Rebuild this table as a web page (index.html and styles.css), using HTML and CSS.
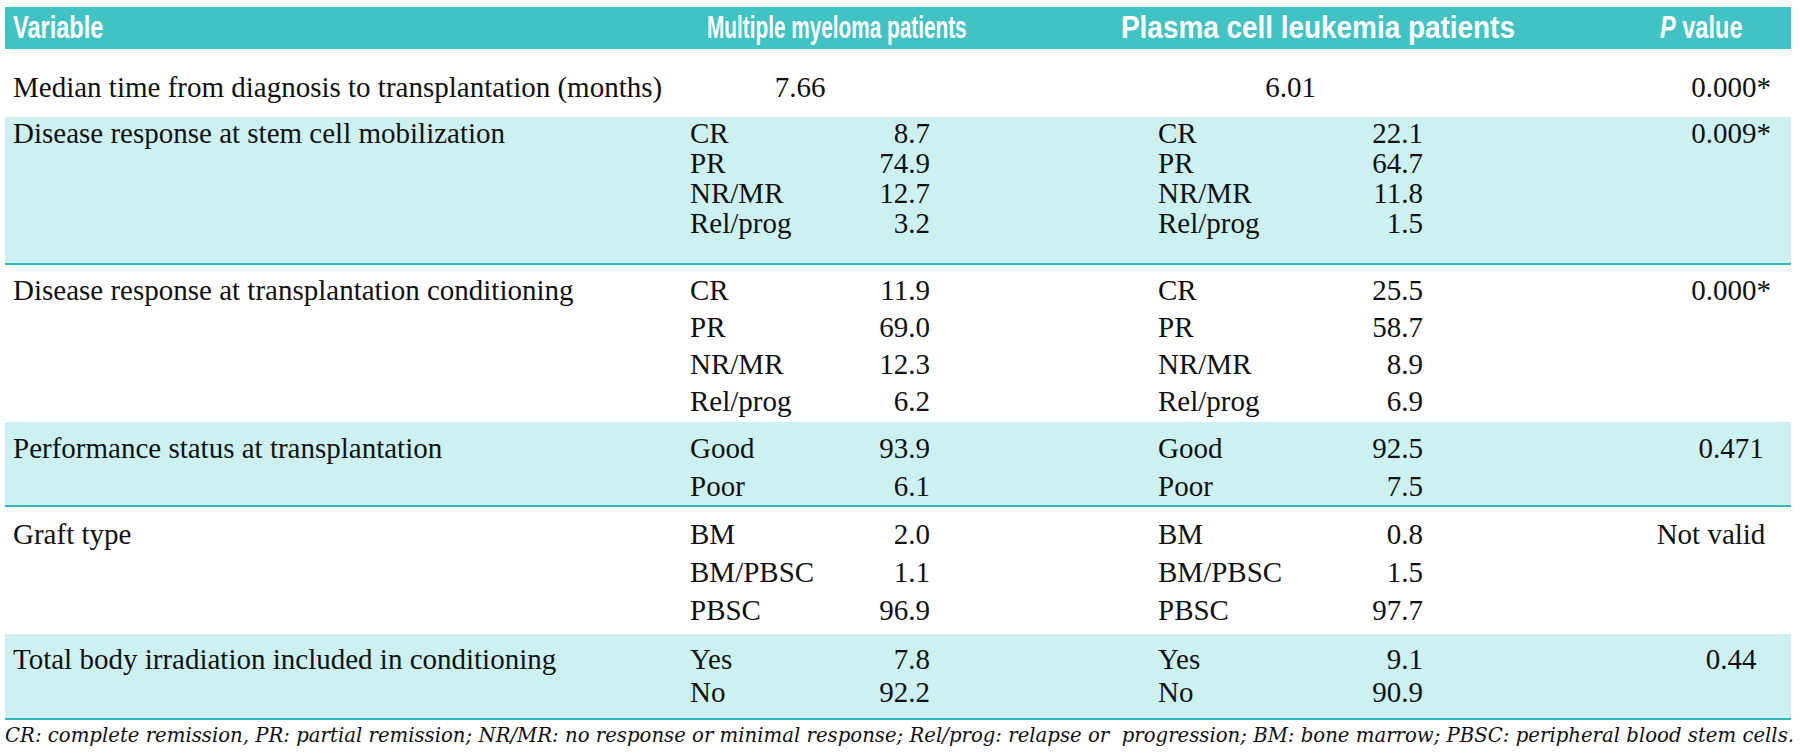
FILE: index.html
```html
<!DOCTYPE html>
<html>
<head>
<meta charset="utf-8">
<link rel="stylesheet" href="styles.css">
</head>
<body>
<div class="table">
  <div class="head">
    <div class="h-var"><span class="ht">Variable</span></div>
    <div class="h-mm"><span class="ht narrow">Multiple myeloma patients</span></div>
    <div class="h-pcl"><span class="ht wide">Plasma cell leukemia patients</span></div>
    <div class="h-p"><span class="ht"><i>P</i> value</span></div>
  </div>

  <div class="row first">
    <div class="var">Median time from diagnosis to transplantation (months)</div>
    <div class="mm center mm-one">7.66</div>
    <div class="pcl center">6.01</div>
    <div class="pv">0.000*</div>
  </div>

  <div class="row shade r2">
    <div class="var">Disease response at stem cell mobilization</div>
    <div class="mm">
      <div class="ln"><span>CR</span><span>8.7</span></div>
      <div class="ln"><span>PR</span><span>74.9</span></div>
      <div class="ln"><span>NR/MR</span><span>12.7</span></div>
      <div class="ln"><span>Rel/prog</span><span>3.2</span></div>
    </div>
    <div class="pcl">
      <div class="ln"><span>CR</span><span>22.1</span></div>
      <div class="ln"><span>PR</span><span>64.7</span></div>
      <div class="ln"><span>NR/MR</span><span>11.8</span></div>
      <div class="ln"><span>Rel/prog</span><span>1.5</span></div>
    </div>
    <div class="pv">0.009*</div>
  </div>

  <div class="row plain r3">
    <div class="var">Disease response at transplantation conditioning</div>
    <div class="mm">
      <div class="ln"><span>CR</span><span>11.9</span></div>
      <div class="ln"><span>PR</span><span>69.0</span></div>
      <div class="ln"><span>NR/MR</span><span>12.3</span></div>
      <div class="ln"><span>Rel/prog</span><span>6.2</span></div>
    </div>
    <div class="pcl">
      <div class="ln"><span>CR</span><span>25.5</span></div>
      <div class="ln"><span>PR</span><span>58.7</span></div>
      <div class="ln"><span>NR/MR</span><span>8.9</span></div>
      <div class="ln"><span>Rel/prog</span><span>6.9</span></div>
    </div>
    <div class="pv">0.000*</div>
  </div>

  <div class="row shade r4">
    <div class="var">Performance status at transplantation</div>
    <div class="mm">
      <div class="ln"><span>Good</span><span>93.9</span></div>
      <div class="ln"><span>Poor</span><span>6.1</span></div>
    </div>
    <div class="pcl">
      <div class="ln"><span>Good</span><span>92.5</span></div>
      <div class="ln"><span>Poor</span><span>7.5</span></div>
    </div>
    <div class="pv">0.471</div>
  </div>

  <div class="row plain r5">
    <div class="var">Graft type</div>
    <div class="mm">
      <div class="ln"><span>BM</span><span>2.0</span></div>
      <div class="ln"><span>BM/PBSC</span><span>1.1</span></div>
      <div class="ln"><span>PBSC</span><span>96.9</span></div>
    </div>
    <div class="pcl">
      <div class="ln"><span>BM</span><span>0.8</span></div>
      <div class="ln"><span>BM/PBSC</span><span>1.5</span></div>
      <div class="ln"><span>PBSC</span><span>97.7</span></div>
    </div>
    <div class="pv nv">Not valid</div>
  </div>

  <div class="row shade r6">
    <div class="var">Total body irradiation included in conditioning</div>
    <div class="mm">
      <div class="ln"><span>Yes</span><span>7.8</span></div>
      <div class="ln"><span>No</span><span>92.2</span></div>
    </div>
    <div class="pcl">
      <div class="ln"><span>Yes</span><span>9.1</span></div>
      <div class="ln"><span>No</span><span>90.9</span></div>
    </div>
    <div class="pv">0.44</div>
  </div>
</div>
<p class="note">CR: complete remission, PR: partial remission; NR/MR: no response or minimal response; Rel/prog: relapse or&nbsp; progression; BM: bone marrow; PBSC: peripheral blood stem cells.</p>
</body>
</html>
```

FILE: styles.css
```css
html, body {
  margin: 0;
  padding: 0;
  background: #ffffff;
}

body {
  padding: 7px 9px 0 5px;
  font-family: "Liberation Serif", "Times New Roman", serif;
  color: #111111;
}

.table {
  width: 1786px;
}

/* header band */
.head {
  display: grid;
  grid-template-columns: 702px 414px 1fr 210px;
  height: 42px;
  background: #42c3c3;
  color: #ffffff;
  font-family: "Liberation Sans", Arial, sans-serif;
  font-weight: bold;
  font-size: 31px;
  line-height: 42px;
  white-space: nowrap;
  overflow: hidden;
}

.h-var {
  padding-left: 8px;
}

.h-p {
  padding-left: 79px;
}

.ht {
  display: inline-block;
  transform: scaleX(0.76);
  transform-origin: left center;
}

.ht.narrow {
  transform: scaleX(0.67);
}

.ht.wide {
  transform: scaleX(0.9);
}

/* body rows */
.row {
  display: grid;
  grid-template-columns: 685px 240px 228px 265px 1fr 180px;
  font-size: 29px;
  line-height: 30px;
}

.row.shade {
  background: #cdf1f1;
  border-bottom: 2px solid #2fb9b9;
}

.row.first {
  padding: 23px 0 15px;
}

.row.r2 {
  padding: 1px 0 25px;
}

.row.r3 {
  line-height: 37px;
  padding: 7px 0 2px;
}

.row.r4 {
  line-height: 38px;
  padding: 7px 0 0;
}

.row.r5 {
  line-height: 38px;
  padding: 8px 0 5px;
}

.row.r6 {
  line-height: 33px;
  padding: 9px 0 9px;
}

.var {
  grid-column: 1;
  padding-left: 8px;
}

.mm {
  grid-column: 2;
}

.mm-one {
  padding-right: 20px;
}

.pcl {
  grid-column: 4;
}

.pv {
  grid-column: 6;
  text-align: center;
  padding-left: 60px;
}

.pv.nv {
  padding-left: 20px;
}

.center {
  text-align: center;
}

.ln {
  display: flex;
  justify-content: space-between;
}

/* footnote */
.note {
  margin: 2px 0 0;
  font-family: "DejaVu Serif", serif;
  font-style: italic;
  font-size: 19.7px;
  line-height: 28px;
  color: #111111;
  white-space: nowrap;
}
```
